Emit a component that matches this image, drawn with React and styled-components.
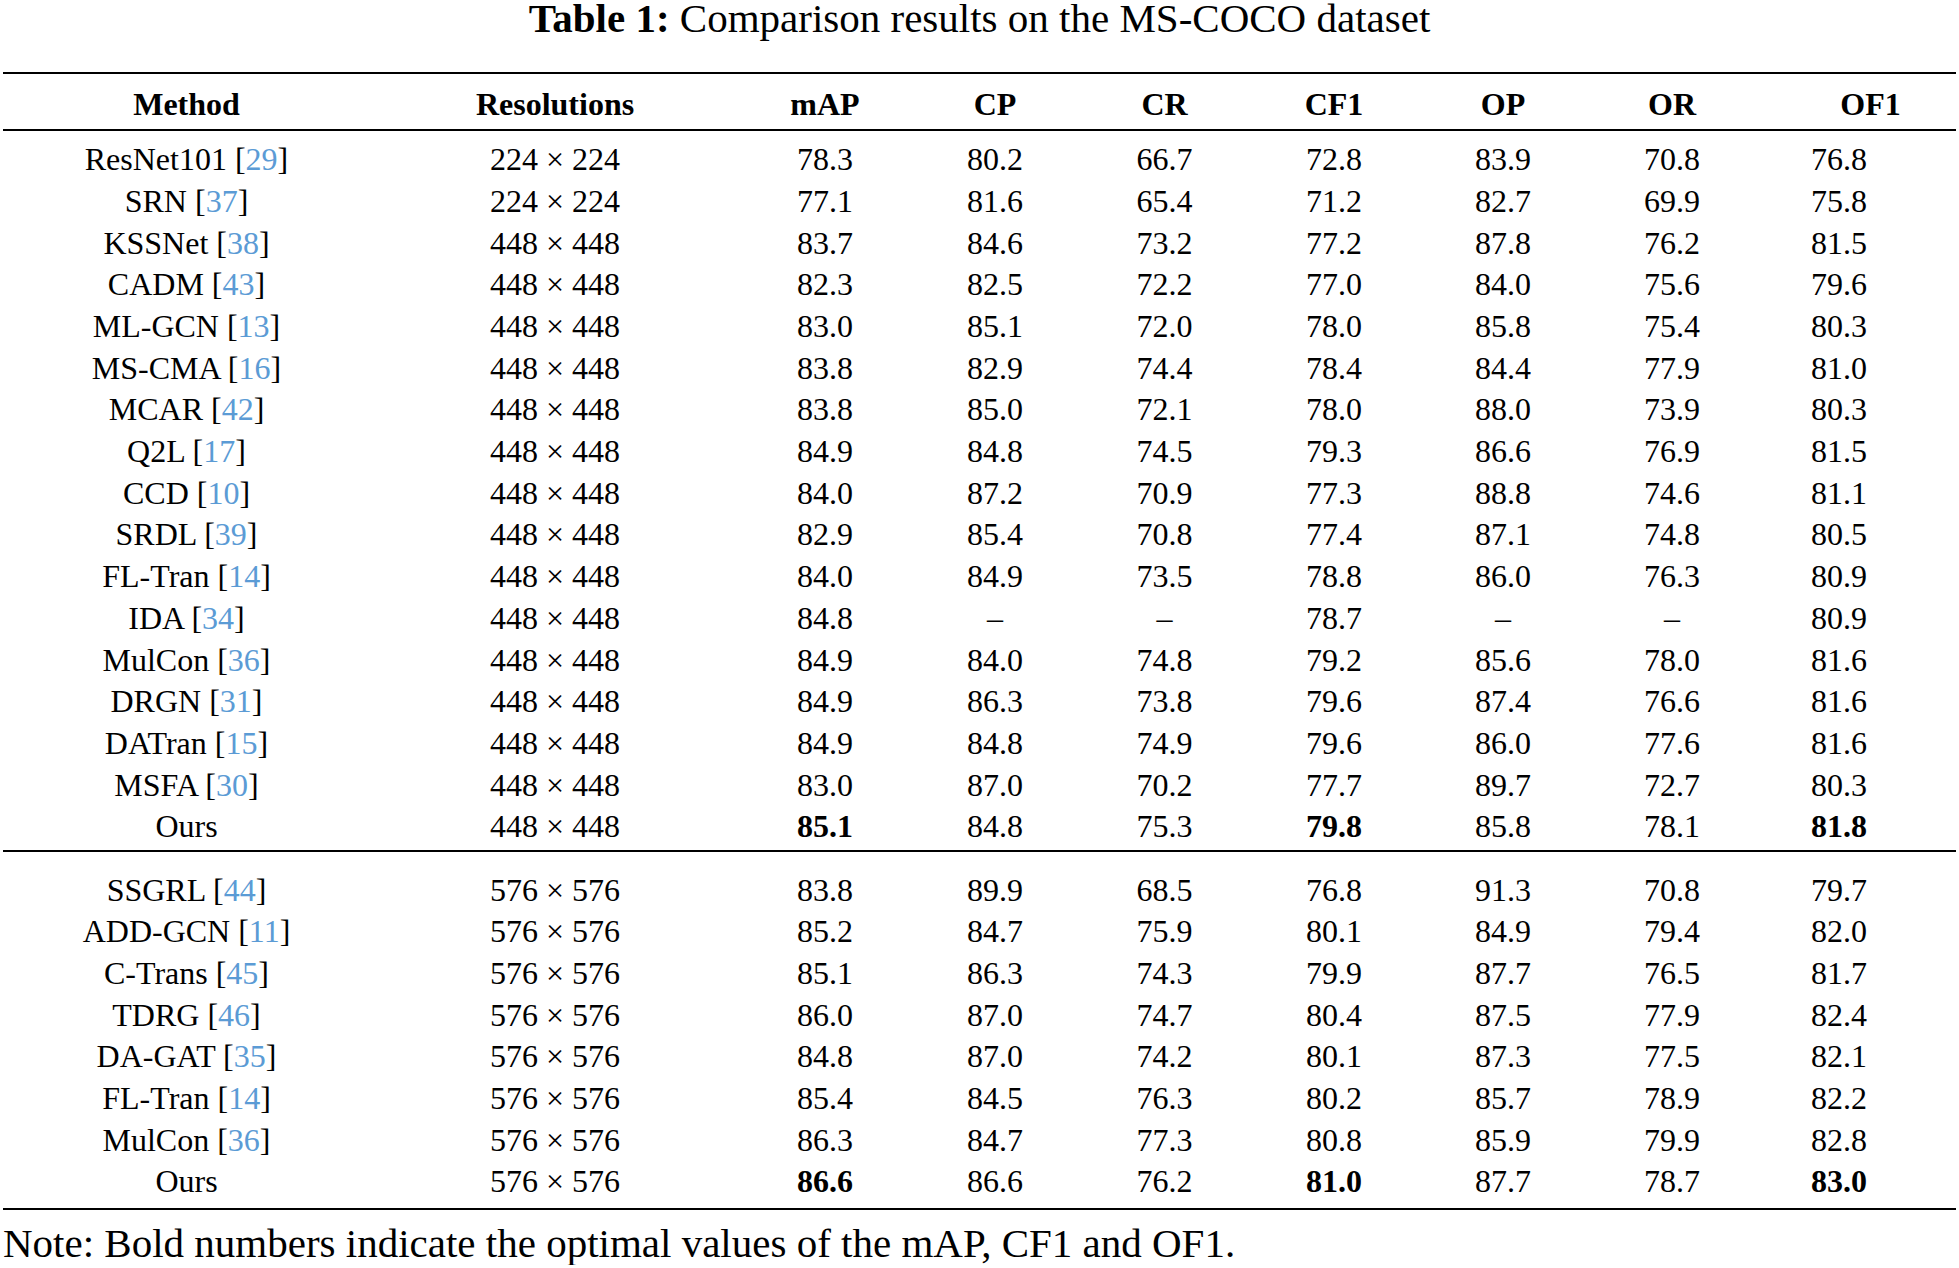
import React from 'react';
import styled, {createGlobalStyle} from 'styled-components';

const GlobalStyle = createGlobalStyle`
    html, body {
        margin: 0;
        padding: 0;
        background: #ffffff;
    }
    body {
        font-family: "Liberation Serif", "Times New Roman", serif;
        color: #000000;
    }
`;

const Page = styled.main`
    width: 1959px;
    padding-top: 4px;
    font-family: "Liberation Serif", "Times New Roman", serif;
    color: #000000;
`;

const Caption = styled.h1`
    margin: 0 0 32px;
    height: 36px;
    font-size: 41px;
    line-height: 28px;
    font-weight: normal;
    text-align: center;
    white-space: nowrap;
    b {
        font-weight: bold;
    }
`;

const Table = styled.section`
    margin: 0 3px;
    border-top: 2px solid #000;
    border-bottom: 2px solid #000;
`;

const COLUMNS = '367px 370px 170px 170px 169px 170px 168px 170px 1fr';

const HeadRow = styled.div`
    display: grid;
    grid-template-columns: ${COLUMNS};
    padding-top: 5px;
    line-height: 50px;
    font-size: 32px;
    border-bottom: 2px solid #000;
`;

const Group = styled.div`
    padding-top: ${p => p.$top}px;
    padding-bottom: ${p => p.$bottom}px;
    border-top: ${p => (p.$divided ? '2px solid #000' : 'none')};
`;

const Row = styled.div`
    display: grid;
    grid-template-columns: ${COLUMNS};
    font-size: 32px;
    line-height: ${p => p.$pitch}px;
    height: ${p => p.$pitch}px;
`;

const Cell = styled.div`
    text-align: center;
    white-space: nowrap;
    font-weight: ${p => (p.$bold ? 'bold' : 'normal')};
    padding-left: ${p => p.$padLeft || 0}px;
    padding-right: ${p => p.$padRight || 0}px;
`;

const Ref = styled.span`
    color: #5b9bd5;
`;

const Note = styled.p`
    margin: 11px 0 0 3px;
    font-size: 41px;
    line-height: 44px;
    white-space: nowrap;
`;

const HEAD = ['Method', 'Resolutions', 'mAP', 'CP', 'CR', 'CF1', 'OP', 'OR', 'OF1'];

// [name, ref, resolution, mAP, CP, CR, CF1, OP, OR, OF1]
const standard = [
    ['ResNet101', '29', '224 × 224', '78.3', '80.2', '66.7', '72.8', '83.9', '70.8', '76.8'],
    ['SRN', '37', '224 × 224', '77.1', '81.6', '65.4', '71.2', '82.7', '69.9', '75.8'],
    ['KSSNet', '38', '448 × 448', '83.7', '84.6', '73.2', '77.2', '87.8', '76.2', '81.5'],
    ['CADM', '43', '448 × 448', '82.3', '82.5', '72.2', '77.0', '84.0', '75.6', '79.6'],
    ['ML-GCN', '13', '448 × 448', '83.0', '85.1', '72.0', '78.0', '85.8', '75.4', '80.3'],
    ['MS-CMA', '16', '448 × 448', '83.8', '82.9', '74.4', '78.4', '84.4', '77.9', '81.0'],
    ['MCAR', '42', '448 × 448', '83.8', '85.0', '72.1', '78.0', '88.0', '73.9', '80.3'],
    ['Q2L', '17', '448 × 448', '84.9', '84.8', '74.5', '79.3', '86.6', '76.9', '81.5'],
    ['CCD', '10', '448 × 448', '84.0', '87.2', '70.9', '77.3', '88.8', '74.6', '81.1'],
    ['SRDL', '39', '448 × 448', '82.9', '85.4', '70.8', '77.4', '87.1', '74.8', '80.5'],
    ['FL-Tran', '14', '448 × 448', '84.0', '84.9', '73.5', '78.8', '86.0', '76.3', '80.9'],
    ['IDA', '34', '448 × 448', '84.8', '–', '–', '78.7', '–', '–', '80.9'],
    ['MulCon', '36', '448 × 448', '84.9', '84.0', '74.8', '79.2', '85.6', '78.0', '81.6'],
    ['DRGN', '31', '448 × 448', '84.9', '86.3', '73.8', '79.6', '87.4', '76.6', '81.6'],
    ['DATran', '15', '448 × 448', '84.9', '84.8', '74.9', '79.6', '86.0', '77.6', '81.6'],
    ['MSFA', '30', '448 × 448', '83.0', '87.0', '70.2', '77.7', '89.7', '72.7', '80.3'],
    ['Ours', null, '448 × 448', '85.1', '84.8', '75.3', '79.8', '85.8', '78.1', '81.8'],
];

const large = [
    ['SSGRL', '44', '576 × 576', '83.8', '89.9', '68.5', '76.8', '91.3', '70.8', '79.7'],
    ['ADD-GCN', '11', '576 × 576', '85.2', '84.7', '75.9', '80.1', '84.9', '79.4', '82.0'],
    ['C-Trans', '45', '576 × 576', '85.1', '86.3', '74.3', '79.9', '87.7', '76.5', '81.7'],
    ['TDRG', '46', '576 × 576', '86.0', '87.0', '74.7', '80.4', '87.5', '77.9', '82.4'],
    ['DA-GAT', '35', '576 × 576', '84.8', '87.0', '74.2', '80.1', '87.3', '77.5', '82.1'],
    ['FL-Tran', '14', '576 × 576', '85.4', '84.5', '76.3', '80.2', '85.7', '78.9', '82.2'],
    ['MulCon', '36', '576 × 576', '86.3', '84.7', '77.3', '80.8', '85.9', '79.9', '82.8'],
    ['Ours', null, '576 × 576', '86.6', '86.6', '76.2', '81.0', '87.7', '78.7', '83.0'],
];

// our rows show mAP, CF1 and OF1 in bold
const BOLD_COLS = [3, 6, 9];

const ResultRow = ({row, pitch}) => {
    const [name, ref, ...rest] = row;
    const isOurs = ref === null;
    return (
        <Row $pitch={pitch}>
            <Cell>
                {name}
                {ref && (
                    <> [<Ref>{ref}</Ref>]</>
                )}
            </Cell>
            {rest.map((value, i) => (
                <Cell
                    key={i}
                    $bold={isOurs && BOLD_COLS.includes(i + 2)}
                    $padRight={i === rest.length - 1 ? 35 : 0}>
                    {value}
                </Cell>
            ))}
        </Row>
    );
};

const App = () => {
    return (
        <Page>
            <GlobalStyle />
            <Caption>
                <b>Table 1:</b> Comparison results on the MS-COCO dataset
            </Caption>
            <Table>
                <HeadRow>
                    {HEAD.map((h, i) => (
                        <Cell
                            key={h}
                            $bold
                            $padLeft={i === HEAD.length - 1 ? 28 : 0}>
                            {h}
                        </Cell>
                    ))}
                </HeadRow>
                <Group $top={8.3} $bottom={1.7}>
                    {standard.map((row, i) => (
                        <ResultRow key={i} row={row} pitch={41.7} />
                    ))}
                </Group>
                <Group $divided $top={18} $bottom={4.8}>
                    {large.map((row, i) => (
                        <ResultRow key={i} row={row} pitch={41.65} />
                    ))}
                </Group>
            </Table>
            <Note>Note: Bold numbers indicate the optimal values of the mAP, CF1 and OF1.</Note>
        </Page>
    );
};

export default App;
